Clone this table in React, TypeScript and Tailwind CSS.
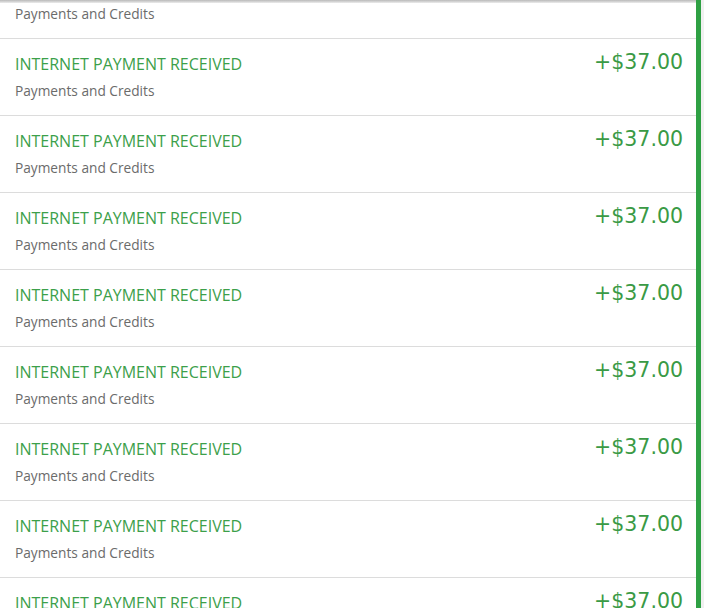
const rows = Array.from({ length: 10 }, (_, i) => ({
  id: i,
  title: 'INTERNET PAYMENT RECEIVED',
  category: 'Payments and Credits',
  amount: '+$37.00',
}));

export default function App() {
  return (
    <div className="flex h-[608px] w-[704px] overflow-hidden bg-white">
      <div className="relative flex-1 overflow-hidden">
        <div className="pointer-events-none absolute inset-x-0 top-0 z-10 h-[3px] bg-gradient-to-b from-[#b9b9b9] to-[#ececec]" />
        <ul className="-mt-[38px]">
          {rows.map((row) => (
            <li
              key={row.id}
              className="flex h-[77px] items-start justify-between border-b border-[#dcdcdc] pl-[15px] pr-[13px]"
            >
              <div className="pt-[14px]">
                <p className="font-['Open_Sans',sans-serif] text-[16px] leading-[22px] text-[#3ca04a]">
                  {row.title}
                </p>
                <p className="mt-[6px] font-['Open_Sans',sans-serif] text-[13.7px] leading-[20px] text-[#6b6b6b]">
                  {row.category}
                </p>
              </div>
              <span className="pt-[11px] font-['DejaVu_Sans',sans-serif] text-[20.5px] leading-[24px] text-[#3a9a45]">
                {row.amount}
              </span>
            </li>
          ))}
        </ul>
      </div>
      <div className="w-[5px] bg-[#2ea043]" />
      <div className="w-[3px] bg-[#f0f0f0]" />
    </div>
  );
}
